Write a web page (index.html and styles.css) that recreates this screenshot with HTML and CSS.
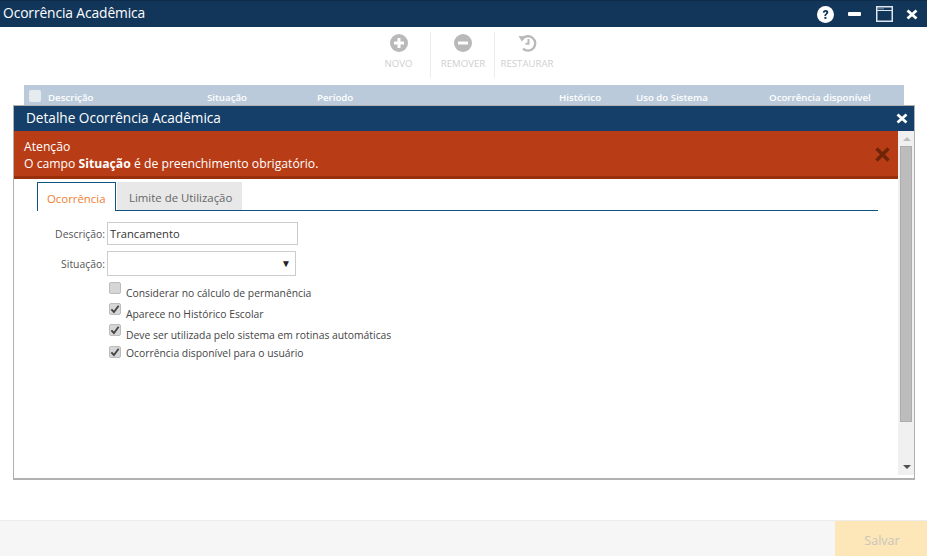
FILE: index.html
```html
<!DOCTYPE html>
<html lang="pt">
<head>
<meta charset="utf-8">
<title>Ocorrência Acadêmica</title>
<link rel="stylesheet" href="styles.css">
</head>
<body>
<div class="app">
  <header class="titlebar">
    <span class="titlebar-text">Ocorrência Acadêmica</span>
    <div class="window-actions">
      <svg class="ic-help" width="17" height="17" viewBox="0 0 17 17"><circle cx="8.5" cy="8.5" r="8.5" fill="#fff"/><path d="M5.8 6.6c0-1.7 1.2-2.6 2.8-2.6s2.7.9 2.7 2.3c0 1.1-.6 1.6-1.4 2.2-.6.4-.8.7-.8 1.4H7.4c0-1.1.3-1.6 1-2.2.6-.4.9-.7.9-1.2 0-.5-.3-.8-.8-.8-.6 0-.9.4-.9 1z" fill="#12365a"/><rect x="7.4" y="10.9" width="2" height="2" fill="#12365a"/></svg>
      <svg class="ic-min" width="13" height="4" viewBox="0 0 13 4"><rect width="13" height="4" rx="1" fill="#fff"/></svg>
      <svg class="ic-max" width="17" height="16" viewBox="0 0 17 16"><rect x=".75" y=".75" width="15.5" height="14.5" fill="none" stroke="#dfe6ee" stroke-width="1.5"/><path d="M1 4.500h15" stroke="#dfe6ee" stroke-width="1"/><path d="M2.500 2.800h5" stroke="#dfe6ee" stroke-width="1" stroke-dasharray="1 1"/></svg>
      <svg class="ic-close" width="12" height="11" viewBox="0 0 12 11"><path d="M1.5 1.5l9 8M10.5 1.5l-9 8" stroke="#fff" stroke-width="2.8"/></svg>
    </div>
  </header>

  <nav class="toolbar">
    <div class="tool">
      <svg width="18" height="18" viewBox="0 0 18 18"><circle cx="9" cy="9" r="9" fill="#b9b9b9"/><path d="M9 4v10M4 9h10" stroke="#fff" stroke-width="3"/></svg>
      <span>NOVO</span>
    </div>
    <div class="tool">
      <svg width="18" height="18" viewBox="0 0 18 18"><circle cx="9" cy="9" r="9" fill="#b9b9b9"/><path d="M4 9h10" stroke="#fff" stroke-width="3"/></svg>
      <span>REMOVER</span>
    </div>
    <div class="tool">
      <svg width="19" height="18" viewBox="0 0 19 18"><path d="M4.2 5.2A7.2 7.2 0 1 1 5 14.6" fill="none" stroke="#b9b9b9" stroke-width="2.4"/><path d="M0.5 2l6.5.2-3 5.600z" fill="#b9b9b9"/><path d="M10.500 5v4.800H7.500" fill="none" stroke="#b9b9b9" stroke-width="2"/></svg>
      <span>RESTAURAR</span>
    </div>
  </nav>

  <div class="grid-head">
    <span class="grid-check"></span>
    <span class="col col-desc">Descrição</span>
    <span class="col col-sit">Situação</span>
    <span class="col col-per">Período</span>
    <span class="col col-hist">Histórico</span>
    <span class="col col-uso">Uso do Sistema</span>
    <span class="col col-disp">Ocorrência disponível</span>
  </div>

  <footer class="footer">
    <button class="save" type="button">Salvar</button>
  </footer>
</div>

<section class="modal">
  <div class="modal-head">
    <span>Detalhe Ocorrência Acadêmica</span>
    <svg width="12" height="11" viewBox="0 0 12 11"><path d="M1.500 1.500l9 8M10.500 1.500l-9 8" stroke="#fff" stroke-width="2.800"/></svg>
  </div>
  <div class="modal-body">
    <div class="modal-content">
      <div class="alert">
        <div class="alert-text">
          <div>Atenção</div>
          <div>O campo <b>Situação</b> é de preenchimento obrigatório.</div>
        </div>
        <svg class="alert-close" width="15" height="15" viewBox="0 0 15 15"><path d="M1.500 1.500l12 12M13.500 1.500l-12 12" stroke="#6e2409" stroke-width="3.400"/></svg>
      </div>
      <div class="tabs">
        <div class="tab tab-active">Ocorrência</div>
        <div class="tab">Limite de Utilização</div>
      </div>
      <form class="form">
        <div class="row">
          <label class="label">Descrição:</label>
          <div class="input">Trancamento</div>
        </div>
        <div class="row row-select">
          <label class="label">Situação:</label>
          <div class="select"><span class="caret">▼</span></div>
        </div>
        <div class="checks">
          <div class="check check-1"><span class="box"></span><span>Considerar no cálculo de permanência</span></div>
          <div class="check check-2"><span class="box on"><svg width="11" height="10" viewBox="0 0 11 10"><path d="M1.500 5.500l2.800 2.800L9.500 1.500" fill="none" stroke="#444" stroke-width="2"/></svg></span><span>Aparece no Histórico Escolar</span></div>
          <div class="check check-3"><span class="box on"><svg width="11" height="10" viewBox="0 0 11 10"><path d="M1.500 5.500l2.800 2.800L9.500 1.500" fill="none" stroke="#444" stroke-width="2"/></svg></span><span>Deve ser utilizada pelo sistema em rotinas automáticas</span></div>
          <div class="check check-4"><span class="box on"><svg width="11" height="10" viewBox="0 0 11 10"><path d="M1.500 5.500l2.800 2.800L9.500 1.500" fill="none" stroke="#444" stroke-width="2"/></svg></span><span>Ocorrência disponível para o usuário</span></div>
        </div>
      </form>
    </div>
    <div class="scrollbar">
      <span class="arrow-up"></span>
      <span class="thumb"></span>
      <span class="arrow-down"></span>
    </div>
  </div>
</section>
</body>
</html>
```

FILE: styles.css
```css
* { box-sizing: border-box; }
html, body { margin: 0; height: 100%; overflow: hidden; }
body { font-family: "Open Sans", "Noto Sans", sans-serif; font-size: 11px; color: #333; background: #fff; position: relative; }
.app { height: 556px; display: flex; flex-direction: column; }

.titlebar { height: 27px; flex: none; background: #12365a; border-top: 1px solid #0e2c4a; color: #fff; display: flex; align-items: center; justify-content: space-between; padding: 0 9px 0 3px; }
.titlebar-text { font-size: 13.8px; letter-spacing: -.1px; margin-top: -3px; }
.window-actions { display: flex; align-items: center; }
.ic-min { margin-left: 14px; }
.ic-max { margin-left: 15px; }
.ic-close { margin-left: 13px; }

.toolbar { height: 58px; flex: none; display: flex; justify-content: center; padding-top: 5px; margin-left: -4px; }
.tool { height: 46px; display: flex; flex-direction: column; align-items: center; width: 64px; border-left: 1px solid #ececec; color: #cfcfcf; font-size: 9.6px; gap: 5px; padding: 2px 0 0 2px; white-space: nowrap; }
.tool:first-child { border-left: 0; }

.grid-head { height: 21px; flex: none; margin: 0 23px 0 24px; background: #bacada; color: #fff; position: relative; display: flex; align-items: center; font-size: 9.7px; font-weight: 600; }
.grid-check { width: 12px; height: 12px; background: #e6ebf0; border-radius: 2px; margin-left: 5px; }
.col { position: absolute; top: 6px; }
.col-desc { left: 24px; }
.col-sit { left: 183px; }
.col-per { left: 293px; }
.col-hist { left: 535px; }
.col-uso { left: 612px; }
.col-disp { left: 745px; }

.footer { margin-top: auto; height: 36px; flex: none; background: #f6f6f6; border-top: 1px solid #ececec; display: flex; justify-content: flex-end; }
.save { width: 92px; border: 0; background: #fde6b8; color: #c9c6bd; font: 12.5px "Open Sans", sans-serif; padding: 4px 0 0 2px; }

.modal { position: absolute; left: 13px; top: 105px; width: 902px; height: 375px; border: 1px solid #b1b1b1; border-bottom-width: 2px; background: #fff; display: flex; flex-direction: column; }
.modal-head { height: 25px; flex: none; background: #153f68; color: #fff; display: flex; align-items: center; justify-content: space-between; padding: 0 6px 0 12px; font-size: 13.6px; }
.modal-head span { margin-top: -2px; }
.modal-body { flex: 1; display: flex; min-height: 0; }
.modal-content { flex: 1; min-width: 0; }

.alert { height: 48px; background: #b83c15; border-bottom: 3px solid #9a2f0c; color: #fff; font-size: 12.2px; display: flex; align-items: center; justify-content: space-between; padding: 2px 9px 0 10px; line-height: 17px; }
.alert-text b { font-weight: 700; }
.alert-close { margin-right: -1px; }

.tabs { margin: 3px 20px 0 23px; display: flex; height: 29px; border-bottom: 1px solid #10557f; font-size: 11.4px; }
.tab { height: 28px; line-height: 31px; padding: 0 10px 0 12px; background: #e8e8e8; color: #666; margin-left: 1px; }
.tab-active { margin-left: 0; height: 29px; width: 79px; padding: 0 0 0 9px; background: #fff; color: #f08030; border: 1px solid #10557f; border-bottom: 0; }

.form { padding: 11px 0 0; }
.row { display: flex; align-items: center; }
.label { width: 93px; text-align: right; font-size: 10.4px; color: #555; padding-right: 2px; }
.input { width: 191px; height: 23px; border: 1px solid #ccc; font-size: 11.2px; color: #333; padding: 0 2px; line-height: 21px; }
.row-select { margin-top: 6px; }
.select { width: 189px; height: 25px; border: 1px solid #ccc; position: relative; }
.caret { position: absolute; right: 4px; top: 4px; font-size: 10px; color: #222; }

.checks { margin-left: 95px; margin-top: 4px; color: #444; font-size: 10.35px; }
.check { display: flex; align-items: flex-end; gap: 5px; height: 20px; }
.box { width: 12px; height: 12px; background: #d6d6d6; border: 1px solid #bcbcbc; border-radius: 2px; display: flex; align-items: center; justify-content: center; margin-bottom: 6px; }
.check-2 { height: 21px; }
.check-3 { height: 21px; }
.check-4 { height: 18px; }
.check-4 .box { margin-bottom: 2px; }

.scrollbar { width: 16px; flex: none; background: #f0f0f0; position: relative; margin-bottom: 3px; }
.thumb { position: absolute; left: 2px; right: 2px; top: 15px; height: 276px; background: #bcbcbc; border: 1px solid #adadad; }
.arrow-up { position: absolute; left: 5px; top: 6px; border: 4px solid transparent; border-top: 0; border-bottom: 4px solid #bdbdbd; }
.arrow-down { position: absolute; left: 5px; bottom: 6px; border: 4px solid transparent; border-bottom: 0; border-top: 4px solid #505050; }
```
